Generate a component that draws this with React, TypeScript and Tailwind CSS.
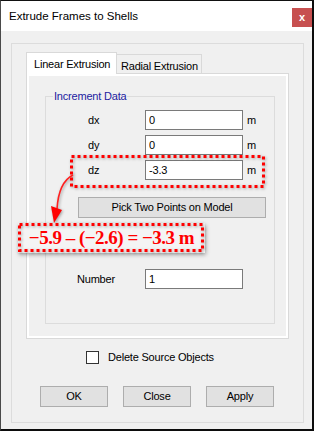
import React from "react";

type RowProps = {
  label: string;
  pad: string;
  value: string;
  unit?: string;
  className?: string;
};

function FieldRow({ label, pad, value, unit, className }: RowProps) {
  return (
    <div className={`flex items-center ${className ?? ""}`}>
      <span className={`w-[99px] ${pad}`}>{label}</span>
      <input
        readOnly
        value={value}
        className="h-[20px] w-[98px] border border-[#7a7a7a] bg-white px-[3px] text-[11px] outline-none"
      />
      {unit && <span className="ml-[4px]">{unit}</span>}
    </div>
  );
}

function WinButton({ children }: { children: React.ReactNode }) {
  return (
    <button className="h-[21px] w-[68px] border border-[#adadad] bg-[#e1e1e1] text-[11px] tracking-[-0.2px]">
      {children}
    </button>
  );
}

export default function App() {
  return (
    <div className="relative flex h-[431px] w-[314px] flex-col border-t border-l border-r-2 border-b-2 border-t-[#111111] border-l-[#4a4a4a] border-r-[#0c0c0c] border-b-[#0c0c0c] bg-[#f0f0f0] font-['Liberation_Sans',Arial,sans-serif] text-[11px] tracking-[-0.2px] text-black">
      {/* Title bar */}
      <div className="flex h-[30px] items-start justify-between bg-white pl-[8px]">
        <span className="mt-[8px] text-[11.5px] leading-[15px] tracking-normal">Extrude Frames to Shells</span>
        <button className="mt-[7px] flex h-[19px] w-[20px] items-center justify-center bg-[#c75050] text-[11px] font-bold leading-none text-white">
          x
        </button>
      </div>

      {/* Dialog body */}
      <div className="ml-[10px] mt-[12px] flex h-[380px] w-[293px] flex-col border border-[#dcdcdc]">
        {/* Tabs */}
        <div className="ml-[14px] mt-[8px] flex items-end whitespace-nowrap">
          <div className="relative z-10 -mb-px h-[22px] w-[91px] border border-b-0 border-[#d9d9d9] bg-white pl-[7px] pt-[3px]">
            Linear Extrusion
          </div>
          <div className="h-[19px] w-[85px] border border-b-0 border-l-0 border-[#d9d9d9] bg-[#f0f0f0] pl-[4px] pt-[3px]">
            Radial Extrusion
          </div>
        </div>

        {/* Tab panel */}
        <div className="ml-[14px] h-[266px] w-[263px] border border-[#d9d9d9]">
          <div className="h-full w-full border-2 border-white bg-[#f0f0f0]">
            <fieldset className="ml-[16px] mt-[14px] w-[230px] border border-[#dcdcdc] pb-[34px] pt-[7px]">
              <legend className="ml-[7px] px-[1px] leading-[13px] text-[#2222a0]">Increment Data</legend>
              <FieldRow label="dx" pad="pl-[42px]" value="0" unit="m" />
              <FieldRow label="dy" pad="pl-[42px]" value="0" unit="m" className="mt-[5px]" />
              <FieldRow label="dz" pad="pl-[42px]" value="-3.3" unit="m" className="mt-[5px]" />
              <button className="ml-[32px] mt-[17px] h-[21px] w-[188px] border border-[#adadad] bg-[#e1e1e1] text-[11px] tracking-[-0.2px]">
                Pick Two Points on Model
              </button>
              <FieldRow label="Number" pad="pl-[31px]" value="1" className="mt-[51px]" />
            </fieldset>
          </div>
        </div>

        {/* Checkbox */}
        <label className="ml-[74px] mt-[10px] flex items-center">
          <span className="h-[13px] w-[13px] border border-[#333333] bg-white" />
          <span className="ml-[9px]">Delete Source Objects</span>
        </label>

        {/* Buttons */}
        <div className="ml-[28px] mt-[20px] flex gap-[15px]">
          <WinButton>OK</WinButton>
          <WinButton>Close</WinButton>
          <WinButton>Apply</WinButton>
        </div>
      </div>

      {/* Annotation: formula */}
      <div className="absolute left-[17px] top-[222px] flex h-[30px] w-[187px] items-center justify-center bg-[#f4f4f4] font-['Liberation_Serif','Times_New_Roman',serif] text-[19px] font-bold tracking-[-0.5px] text-[#ff0000] shadow-[1px_2px_4px_rgba(0,0,0,0.3)]">
        −5.9 – (−2.6) = −3.3 m
      </div>

      {/* Annotation: dotted frames and arrow */}
      <svg
        className="pointer-events-none absolute left-[-1px] top-[-1px] drop-shadow-[1px_1px_1.5px_rgba(0,0,0,0.35)]"
        width="314"
        height="431"
        viewBox="0 0 314 431"
      >
        <rect x="71.5" y="156.5" width="192" height="30" fill="none" stroke="#ff0000" strokeWidth="3" strokeDasharray="3 3" />
        <rect x="19.5" y="224.5" width="183" height="26" fill="none" stroke="#ff0000" strokeWidth="3" strokeDasharray="3 3" />
        <path d="M73 175 C63 180 58 193 57 209" fill="none" stroke="#ff2020" strokeWidth="1.6" />
        <path d="M51 206 L62 210 L54 223 Z" fill="#ff0000" />
      </svg>
    </div>
  );
}
